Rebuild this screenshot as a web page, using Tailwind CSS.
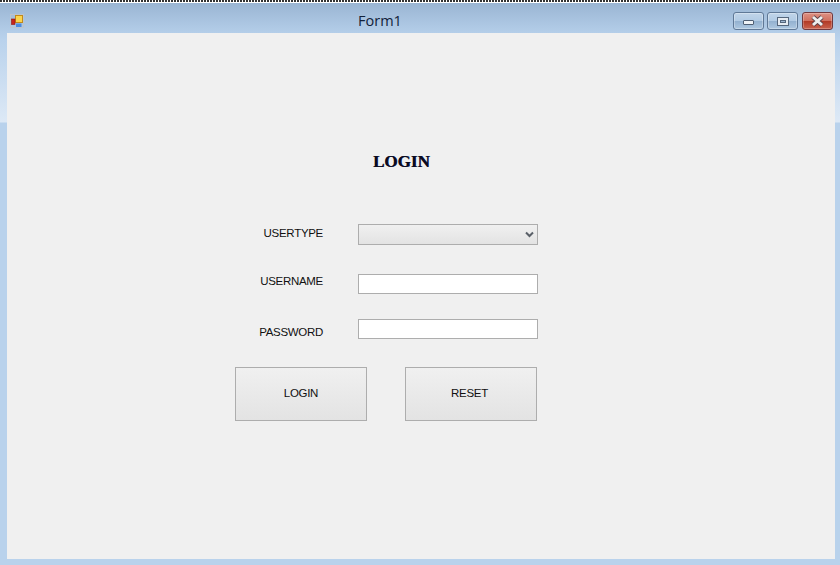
<!DOCTYPE html>
<html lang="en">
<head>
  <meta charset="UTF-8" />
  <title>Form1</title>
  <script src="https://cdn.jsdelivr.net/npm/@tailwindcss/browser@4"></script>
</head>
<body class="w-[840px] h-[565px] overflow-hidden bg-[#b9d2ec] font-['Liberation_Sans',sans-serif]">
  <div class="relative h-full flex flex-col bg-[linear-gradient(180deg,#9ab5d3_3px,#b4cee9_33px,#b9d2ec_40px,#dde9f6_122px,#b9d2ec_123px)]">
    <!-- dotted selection edge -->
    <div class="h-[2px] bg-[repeating-linear-gradient(90deg,#333_0,#333_2px,#fff_2px,#fff_3px)]"></div>
    <div class="h-[1px] bg-white"></div>

    <!-- title bar -->
    <div class="h-[30px] flex items-start">
      <svg class="ml-[10px] mt-[11px] w-[14px] h-[14px]" viewBox="0 0 14 14">
        <rect x="0.5" y="0.5" width="13" height="13" fill="none" stroke="#bcc4ce" />
        <rect x="5.5" y="1.5" width="7" height="7" fill="#fbd44e" stroke="#c08a1c" />
        <rect x="1.5" y="5" width="3.5" height="5.5" fill="#c8241c" stroke="#8e1612" stroke-width="0.6" />
        <rect x="6" y="9.5" width="5.5" height="3.5" fill="#4a8be0" />
      </svg>
      <div class="ml-[334px] mt-[8px] text-[14.5px] leading-5 text-[#12223a] font-['Open_Sans',sans-serif]">Form1</div>
      <div class="ml-auto mr-[7px] mt-[9px] flex">
        <div class="w-[31px] h-[18px] rounded-[3px] border border-[#5f7896] shadow-[inset_0_0_0_1px_rgba(255,255,255,0.3)] bg-[linear-gradient(180deg,#c0d4e9_0%,#b2cbe4_48%,#93b1d0_52%,#aec8e1_100%)] flex items-center justify-center">
          <div class="w-[11px] h-[5px] mt-[3px] rounded-[1px] bg-[#eef2f6] border border-[#4f5f74]"></div>
        </div>
        <div class="ml-[3px] w-[31px] h-[18px] rounded-[3px] border border-[#5f7896] shadow-[inset_0_0_0_1px_rgba(255,255,255,0.3)] bg-[linear-gradient(180deg,#c0d4e9_0%,#b2cbe4_48%,#93b1d0_52%,#aec8e1_100%)] flex items-center justify-center">
          <div class="w-[12px] h-[9px] bg-[#e6ebf1] border border-[#55667c] flex items-center justify-center">
            <div class="w-[6px] h-[3px] bg-[#9db5cf] border border-[#55667c]"></div>
          </div>
        </div>
        <div class="ml-[4px] w-[31px] h-[18px] rounded-[3px] border border-[#71393e] shadow-[inset_0_0_0_1px_rgba(255,255,255,0.25)] bg-[linear-gradient(180deg,#dd9184_0%,#d0705f_48%,#b23a26_52%,#c9624e_100%)] flex items-center justify-center">
          <svg class="w-[15px] h-[12px]" viewBox="0 0 15 12">
            <path d="M3 2 L12 10 M12 2 L3 10" stroke="#5a4048" stroke-width="4.6" />
            <path d="M3 2 L12 10 M12 2 L3 10" stroke="#eeeeee" stroke-width="3" />
          </svg>
        </div>
      </div>
    </div>

    <!-- client area -->
    <div class="ml-[7px] mr-[5px] h-[526px] bg-[#f0f0f0] flex flex-col text-[11.5px] tracking-[-0.3px] text-[#111]">
      <h1 class="mt-[118px] ml-[366px] text-[17px] leading-[22px] tracking-normal font-bold text-[#0b0b1c] [text-shadow:0.5px_0_0_#1c2c66] font-['Liberation_Serif',serif]">LOGIN</h1>

      <div class="mt-[51px] flex items-start h-[21px]">
        <label class="w-[316px] text-right leading-[19px]">USERTYPE</label>
        <div class="ml-[35px] w-[180px] h-[21px] border border-[#adadad] bg-[linear-gradient(180deg,#f0f0f0,#e3e3e3)] flex items-center justify-end pr-[3px]">
          <svg class="w-[9px] h-[7px]" viewBox="0 0 9 7"><path d="M1 1.5 L4.5 5 L8 1.5" fill="none" stroke="#5a6068" stroke-width="2" /></svg>
        </div>
      </div>

      <div class="mt-[29px] flex items-start h-[20px]">
        <label class="w-[316px] text-right leading-[14px]">USERNAME</label>
        <input class="ml-[35px] w-[180px] h-[20px] border border-[#adadad] bg-white" />
      </div>

      <div class="mt-[25px] flex items-start h-[20px]">
        <label class="w-[316px] text-right leading-[14px] mt-[6px]">PASSWORD</label>
        <input class="ml-[35px] w-[180px] h-[20px] border border-[#adadad] bg-white" />
      </div>

      <div class="mt-[28px] ml-[228px] flex gap-[38px]">
        <button class="w-[132px] h-[54px] border border-[#adadad] bg-[linear-gradient(180deg,#f0f0f0,#e3e3e3)]">LOGIN</button>
        <button class="w-[132px] h-[54px] border border-[#adadad] bg-[linear-gradient(180deg,#f0f0f0,#e3e3e3)] pr-[3px]">RESET</button>
      </div>
    </div>
  </div>
</body>
</html>
